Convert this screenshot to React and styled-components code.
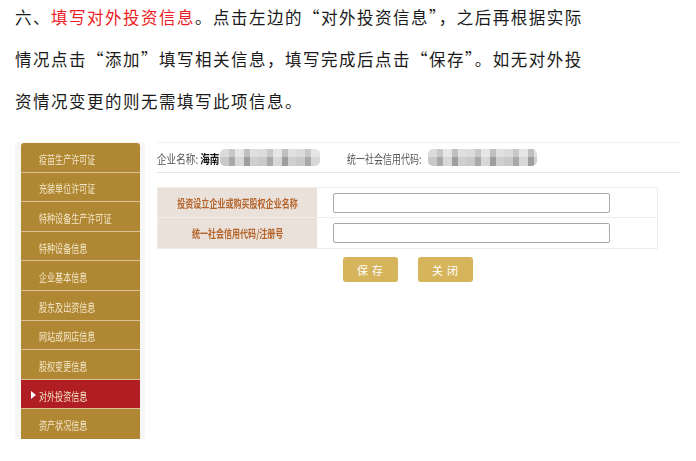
import React from "react";
import styled, { createGlobalStyle } from "styled-components";

const Global = createGlobalStyle`
  html, body { margin: 0; padding: 0; background: #fff; }
  body { font-family: "Noto Sans CJK SC", "Noto Sans", sans-serif; }
`;

const Page = styled.div`
  width: 696px;
  height: 461px;
  padding: 5px 0 0 15px;
  box-sizing: border-box;
  overflow: hidden;
`;

const Intro = styled.div`
  display: flex;
  flex-direction: column;
  gap: 18px;
`;

const Line = styled.div`
  height: 24px;
  line-height: 24px;
  font-size: 16.5px;
  letter-spacing: 1.5px;
  color: #1a1a1a;
  white-space: nowrap;
`;

const Red = styled.span`
  color: #ee1c24;
`;

const Panel = styled.div`
  margin-top: 29px;
  width: 665px;
  height: 297px;
  display: flex;
`;

const SideCol = styled.div`
  width: 130px;
  background: #f6f6f6;
  padding: 1px 5px 0 6px;
  box-sizing: border-box;
  display: flex;
  flex-direction: column;
`;

const NavItem = styled.div`
  height: 29.6px;
  box-sizing: border-box;
  background: ${(p) => (p.$active ? "#b01d22" : "#b08833")};
  border-bottom: 1px solid ${(p) => (p.$last ? "transparent" : "#d8c294")};
  border-radius: ${(p) => (p.$first ? "3px 3px 0 0" : "0")};
  display: flex;
  align-items: center;
  padding: 3px 0 0 18px;
  position: relative;
  color: #f4e6c9;
  font-size: 11.5px;
`;

const Arrow = styled.span`
  position: absolute;
  left: 10px;
  top: 50%;
  margin-top: -3px;
  width: 0;
  height: 0;
  border-left: 5px solid #fff;
  border-top: 4px solid transparent;
  border-bottom: 4px solid transparent;
`;

const Squeeze = styled.span`
  display: inline-block;
  white-space: nowrap;
  transform: scaleX(${(p) => p.$sx || 0.75});
  transform-origin: ${(p) => p.$origin || "left center"};
`;

const Content = styled.div`
  flex: 1;
  padding-left: 12px;
  background: #fff;
`;

const Header = styled.div`
  height: 31px;
  box-sizing: border-box;
  border-top: 1px solid #f0f0f0;
  border-bottom: 1px solid #e6e6e6;
  display: flex;
  align-items: center;
  font-size: 12px;
  color: #555;
`;

const HeadLabel = styled.div`
  width: ${(p) => p.$w}px;
  flex-shrink: 0;
  overflow: visible;
  padding-top: 1px;
`;

const Bold = styled.b`
  color: #111;
  font-weight: 700;
`;

const Blur = styled.div`
  width: ${(p) => p.$w}px;
  height: 17px;
  flex-shrink: 0;
  margin-right: ${(p) => p.$mr || 0}px;
  border-radius: 5px;
  filter: blur(0.7px);
  background:
    linear-gradient(180deg, rgba(255,255,255,0.35) 0 45%, rgba(0,0,0,0) 45% 100%),
    repeating-linear-gradient(90deg, #c9c9c9 0 9px, #a9a9a9 9px 15px, #d8d8d8 15px 24px, #9e9e9e 24px 30px, #cfcfcf 30px 38px);
`;

const FormTable = styled.div`
  margin-top: 14px;
  width: 501px;
  display: grid;
  grid-template-columns: 159px 1fr;
  border: 1px solid #f0ece8;
  box-sizing: border-box;
`;

const LabelCell = styled.div`
  height: 30px;
  background: #e9e1da;
  border-bottom: ${(p) => (p.$last ? "none" : "1px solid #f3eeea")};
  box-sizing: border-box;
  display: flex;
  align-items: center;
  justify-content: center;
  font-size: 11px;
  font-weight: 700;
  color: #b5642b;
`;

const InputCell = styled.div`
  height: 30px;
  border-bottom: ${(p) => (p.$last ? "none" : "1px solid #f0ece8")};
  box-sizing: border-box;
  display: flex;
  align-items: center;
  padding-left: 16px;
`;

const TextInput = styled.input`
  width: 277px;
  height: 20px;
  box-sizing: border-box;
  border: 1px solid #a9a9a9;
  border-radius: 2px;
  background: #fff;
  outline: none;
  padding: 0 4px;
`;

const Buttons = styled.div`
  width: 501px;
  display: flex;
  justify-content: center;
  gap: 20px;
  margin-top: 8px;
`;

const Btn = styled.button`
  width: 55px;
  height: 25px;
  border: none;
  border-radius: 3px;
  background: #d6b45c;
  color: #fff;
  font-family: inherit;
  font-size: 11px;
  letter-spacing: 4px;
  padding: 0 0 0 4px;
`;

const items = [
  "疫苗生产许可证",
  "充装单位许可证",
  "特种设备生产许可证",
  "特种设备信息",
  "企业基本信息",
  "股东及出资信息",
  "网站或网店信息",
  "股权变更信息",
  "对外投资信息",
  "资产状况信息",
];

export default function App() {
  return (
    <Page>
      <Global />
      <Intro>
        <Line>
          六、<Red>填写对外投资信息</Red>。点击左边的“对外投资信息”，之后再根据实际
        </Line>
        <Line>情况点击“添加”填写相关信息，填写完成后点击“保存”。如无对外投</Line>
        <Line>资情况变更的则无需填写此项信息。</Line>
      </Intro>
      <Panel>
        <SideCol>
          {items.map((t, i) => (
            <NavItem
              key={t}
              $active={t === "对外投资信息"}
              $first={i === 0}
              $last={i === items.length - 1}
            >
              {t === "对外投资信息" && <Arrow />}
              <Squeeze $sx={0.7}>{t}</Squeeze>
            </NavItem>
          ))}
        </SideCol>
        <Content>
          <Header>
            <HeadLabel $w={63}>
              <Squeeze $sx={0.8}>
                企业名称: <Bold>海南</Bold>
              </Squeeze>
            </HeadLabel>
            <Blur $w={100} $mr={27} />
            <HeadLabel $w={81}>
              <Squeeze $sx={0.75}>统一社会信用代码:</Squeeze>
            </HeadLabel>
            <Blur $w={109} />
          </Header>
          <FormTable>
            <LabelCell>
              <Squeeze $sx={0.73} $origin="center">投资设立企业或购买股权企业名称</Squeeze>
            </LabelCell>
            <InputCell>
              <TextInput />
            </InputCell>
            <LabelCell $last>
              <Squeeze $sx={0.73} $origin="center">统一社会信用代码/注册号</Squeeze>
            </LabelCell>
            <InputCell $last>
              <TextInput />
            </InputCell>
          </FormTable>
          <Buttons>
            <Btn>保存</Btn>
            <Btn>关闭</Btn>
          </Buttons>
        </Content>
      </Panel>
    </Page>
  );
}
